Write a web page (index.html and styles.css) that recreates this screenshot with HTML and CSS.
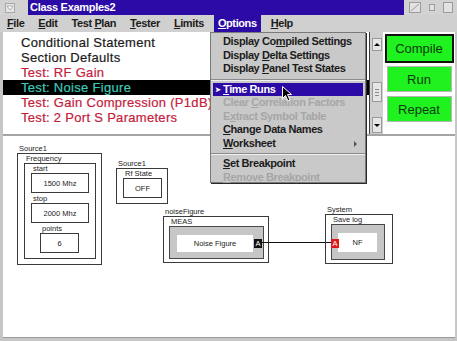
FILE: index.html
```html
<!DOCTYPE html>
<html>
<head>
    <title>Class Examples2</title>
    <link rel="stylesheet" href="styles.css">
</head>
<body>
<div class="window">
    <div class="titlebar">
        <div class="sysmenu">
            <svg width="10" height="10" viewBox="0 0 10 10"><rect x="0.5" y="0.5" width="9" height="9" fill="#e4e4e4" stroke="#a8a8a8"/><path d="M2 3 L8 3 L5 7 Z" fill="#fff" stroke="#9a9a9a" stroke-width="0.8"/></svg>
        </div>
        <div class="caption">Class Examples2</div>
        <div class="winctl">
            <svg width="12" height="11" viewBox="0 0 12 11"><rect x="0.5" y="0.5" width="11" height="10" fill="#e2e2e2" stroke="#9c9c9c"/><path d="M2 9 L10 2" stroke="#9c9c9c"/></svg>
            <svg width="6" height="7" viewBox="0 0 6 7"><rect x="0.5" y="0.5" width="5" height="6" fill="#e2e2e2" stroke="#9c9c9c"/></svg>
            <svg width="10" height="11" viewBox="0 0 10 11"><rect x="0.5" y="0.5" width="9" height="10" fill="#e2e2e2" stroke="#9c9c9c"/></svg>
        </div>
    </div>

    <div class="menubar">
        <span class="mitem"><u>F</u>ile</span>
        <span class="mitem"><u>E</u>dit</span>
        <span class="mitem">Test <u>P</u>lan</span>
        <span class="mitem"><u>T</u>ester</span>
        <span class="mitem"><u>L</u>imits</span>
        <span class="mitem open"><u>O</u>ptions</span>
        <span class="mitem"><u>H</u>elp</span>
    </div>

    <div class="upper">
        <ul class="steps">
            <li>Conditional Statement</li>
            <li>Section Defaults</li>
            <li class="test">Test: RF Gain</li>
            <li class="test selected">Test: Noise Figure</li>
            <li class="test">Test: Gain Compression (P1dB)</li>
            <li class="test">Test: 2 Port S Parameters</li>
        </ul>
        <div class="vscroll">
            <span class="sbtn up"></span>
            <span class="thumb"></span>
            <span class="sbtn down"></span>
        </div>
        <div class="actions">
            <button class="act default">Compile</button>
            <button class="act">Run</button>
            <button class="act">Repeat</button>
        </div>
    </div>

    <div class="canvas">
        <div class="node" style="left: 14px; top: 8px;">
            <div class="node-label">Source1</div>
            <div class="frame freq">
                <div class="node-label">Frequency</div>
                <div class="frame freq-inner">
                    <div class="node-label">start</div>
                    <div class="value wide">1500 Mhz</div>
                    <div class="node-label tall">stop</div>
                    <div class="value wide">2000 Mhz</div>
                    <div class="node-label tall indent">points</div>
                    <div class="value narrow indent">6</div>
                </div>
            </div>
        </div>

        <div class="node" style="left: 113px; top: 23px;">
            <div class="node-label">Source1</div>
            <div class="frame rf">
                <div class="node-label">Rf State</div>
                <div class="value narrow">OFF</div>
            </div>
        </div>

        <div class="node" style="left: 160px; top: 71px;">
            <div class="node-label">noiseFigure</div>
            <div class="frame meas">
                <div class="node-label">MEAS</div>
                <div class="well meas-well">
                    <div class="display">Noise Figure</div>
                    <span class="port out">A</span>
                </div>
            </div>
        </div>

        <div class="wire" style="left: 259px; top: 106px; width: 70px;"></div>

        <div class="node" style="left: 322px; top: 69px;">
            <div class="node-label">System</div>
            <div class="frame sys">
                <div class="node-label">Save log</div>
                <div class="well sys-well">
                    <div class="display small">NF</div>
                    <span class="port in">A</span>
                </div>
            </div>
        </div>
    </div>

    <!-- Options menu, dropped open -->
    <div class="dropdown">
        <div class="ditem">Display Co<u>m</u>piled Settings</div>
        <div class="ditem">Display <u>D</u>elta Settings</div>
        <div class="ditem">Display <u>P</u>anel Test States</div>
        <div class="dsep"></div>
        <div class="ditem active"><span class="check">&#10148;</span><u>T</u>ime Runs</div>
        <div class="ditem disabled">Clear <u>C</u>orrelation Factors</div>
        <div class="ditem disabled">E<u>x</u>tract Symbol Table</div>
        <div class="ditem"><u>C</u>hange Data Names</div>
        <div class="ditem sub"><u>W</u>orksheet</div>
        <div class="dsep"></div>
        <div class="ditem"><u>S</u>et Breakpoint</div>
        <div class="ditem disabled"><u>R</u>emove Breakpoint</div>
    </div>

    <svg class="cursor" width="11" height="16" viewBox="0 0 11 16"><path d="M0.5 0.5 L0.5 12.5 L3.5 9.5 L6 15 L8 14 L5.5 8.5 L9.5 8.5 Z" fill="#000" stroke="#fff" stroke-width="1"/></svg>
</div>
</body>
</html>
```

FILE: styles.css
```css
body {
    margin: 0;
    font-family: "Liberation Sans", Arial, sans-serif;
    background-color: #c8c8c8;
}
.window {
    position: relative;
    width: 457px;
    height: 341px;
    overflow: hidden;
    background-color: #c6c6c6;
}
.titlebar {
    display: flex;
    height: 15px;
    background-color: #d2d2d2;
}
.sysmenu {
    width: 28px;
    display: flex;
    align-items: center;
    padding-left: 5px;
    box-sizing: border-box;
}
.caption {
    flex: 1;
    background-color: #2b0aa6;
    color: #fff;
    font-size: 11px;
    font-weight: bold;
    letter-spacing: -0.3px;
    line-height: 15px;
    padding-left: 2px;
}
.winctl {
    width: 53px;
    display: flex;
    align-items: center;
    gap: 8px;
    padding-left: 5px;
    box-sizing: border-box;
}
.menubar {
    display: flex;
    align-items: center;
    height: 17px;
    padding-left: 3px;
    gap: 6px;
    background-color: #d0d0d0;
    font-size: 11px;
    font-weight: bold;
    letter-spacing: -0.4px;
    color: #1c1c1c;
}
.mitem {
    padding: 2px 4px 3px 4px;
}
.mitem.open {
    background-color: #2b0aa6;
    color: #fff;
}
.upper {
    display: flex;
    height: 102px;
    margin: 0 2px 0 3px;
    border-bottom: 2px solid #a4a4a4;
}
.steps {
    flex: 1;
    margin: 0;
    padding: 3px 0 0 0;
    list-style: none;
    background-color: #fff;
    font-size: 13px;
    letter-spacing: 0.3px;
    -webkit-text-stroke: 0.2px currentColor;
    color: #1a1a1a;
}
.steps li {
    height: 15px;
    line-height: 15px;
    padding-left: 18px;
    white-space: nowrap;
}
.steps .test {
    color: #c5203c;
}
.steps .selected {
    background-color: #000;
    color: #3ecab8;
}
.vscroll {
    width: 14px;
    display: flex;
    flex-direction: column;
    align-items: center;
    padding: 6px 0 1px 0;
    box-sizing: border-box;
    background-color: #cfcfcf;
    border-left: 1px solid #3c3c3c;
}
.sbtn, .thumb {
    display: block;
    width: 8px;
    background-color: #e6e6e6;
    border: 1px solid #9a9a9a;
    position: relative;
}
.sbtn {
    height: 11px;
}
.sbtn::after {
    content: "";
    position: absolute;
    left: 1px;
    top: 4px;
    border-left: 3px solid transparent;
    border-right: 3px solid transparent;
}
.sbtn.up::after {
    border-bottom: 3px solid #000;
}
.sbtn.down {
    margin-top: auto;
    height: 14px;
}
.sbtn.down::after {
    top: 6px;
    border-top: 3px solid #000;
}
.thumb {
    height: 18px;
    margin-top: 31px;
    background-image: repeating-linear-gradient(#e6e6e6 0 2px, #8a8a8a 2px 3px);
    background-size: 4px 10px;
    background-position: center;
    background-repeat: no-repeat;
}
.actions {
    width: 72px;
    display: flex;
    flex-direction: column;
    align-items: center;
    gap: 4px;
    padding-top: 2px;
    background-color: #fff;
}
.act {
    width: 65px;
    height: 26px;
    padding: 0;
    background-color: #1ff21f;
    border: 1px solid #b6b6b6;
    font-family: "Liberation Sans", Arial, sans-serif;
    font-size: 13px;
    color: #0c3a0c;
}
.act.default {
    width: 69px;
    height: 29px;
    border: 2px solid #111;
    margin-bottom: -1px;
}
.canvas {
    position: relative;
    height: 201px;
    margin: 0 2px 0 3px;
    background-color: #fff;
    border-bottom: 1px solid #9a9a9a;
}
.node {
    position: absolute;
    font-size: 7.5px;
    color: #222;
}
.node-label {
    height: 9px;
    line-height: 9px;
    padding-left: 2px;
    white-space: nowrap;
}
.node-label.tall {
    height: 10px;
    line-height: 11px;
}
.indent {
    margin-left: 9px;
}
.frame {
    box-sizing: border-box;
    border: 1px solid #3a3a3a;
    padding-left: 6px;
}
.freq {
    width: 85px;
    height: 112px;
}
.freq-inner {
    width: 72px;
    height: 96px;
}
.rf {
    width: 52px;
    height: 36px;
}
.value {
    box-sizing: border-box;
    height: 20px;
    border: 1px solid #3a3a3a;
    display: flex;
    align-items: center;
    justify-content: center;
}
.value.wide {
    width: 58px;
}
.value.narrow {
    width: 39px;
}
.meas {
    width: 106px;
    height: 47px;
    padding-left: 5px;
}
.sys {
    width: 68px;
    height: 50px;
    padding-left: 5px;
}
.well {
    position: relative;
    box-sizing: border-box;
    border: 1px solid #484848;
    background-color: #c6c6c6;
    padding: 8px 0 0 7px;
}
.meas-well {
    width: 95px;
    height: 33px;
}
.sys-well {
    width: 54px;
    height: 36px;
    padding-left: 6px;
}
.display {
    width: 76px;
    height: 17px;
    background-color: #fff;
    display: flex;
    align-items: center;
    justify-content: center;
}
.display.small {
    width: 39px;
    height: 19px;
}
.port {
    position: absolute;
    width: 8px;
    height: 9px;
    line-height: 9px;
    text-align: center;
    color: #fff;
    font-size: 7.5px;
}
.port.out {
    right: 1px;
    top: 12px;
    background-color: #111;
}
.port.in {
    left: -1px;
    top: 14px;
    background-color: #e01818;
}
.wire {
    position: absolute;
    height: 1px;
    background-color: #111;
}
.dropdown {
    position: absolute;
    left: 210px;
    top: 32px;
    width: 156px;
    box-sizing: border-box;
    padding: 2px 0 0 0;
    height: 151px;
    background-color: #c9c9c9;
    border: 1px solid #7a7a7a;
    box-shadow: 1px 1px 0 #2a2a2a;
    font-size: 11px;
    font-weight: bold;
    letter-spacing: -0.4px;
    color: #1c1c1c;
}
.ditem {
    position: relative;
    height: 13.5px;
    line-height: 13.5px;
    margin: 0 2px;
    padding-left: 10px;
    white-space: nowrap;
}
.ditem.active {
    background-color: #2b0aa6;
    color: #fff;
}
.ditem.disabled {
    color: #a6a6a6;
}
.ditem.sub::after {
    content: "";
    position: absolute;
    right: 6px;
    top: 4px;
    border-top: 3px solid transparent;
    border-bottom: 3px solid transparent;
    border-left: 3px solid #555;
}
.check {
    position: absolute;
    left: 2px;
    font-size: 7px;
}
.dsep {
    margin: 3px 0 2px 0;
    border-top: 1px solid #8a8a8a;
    border-bottom: 1px solid #f0f0f0;
}
.cursor {
    position: absolute;
    left: 282px;
    top: 86px;
}
```
